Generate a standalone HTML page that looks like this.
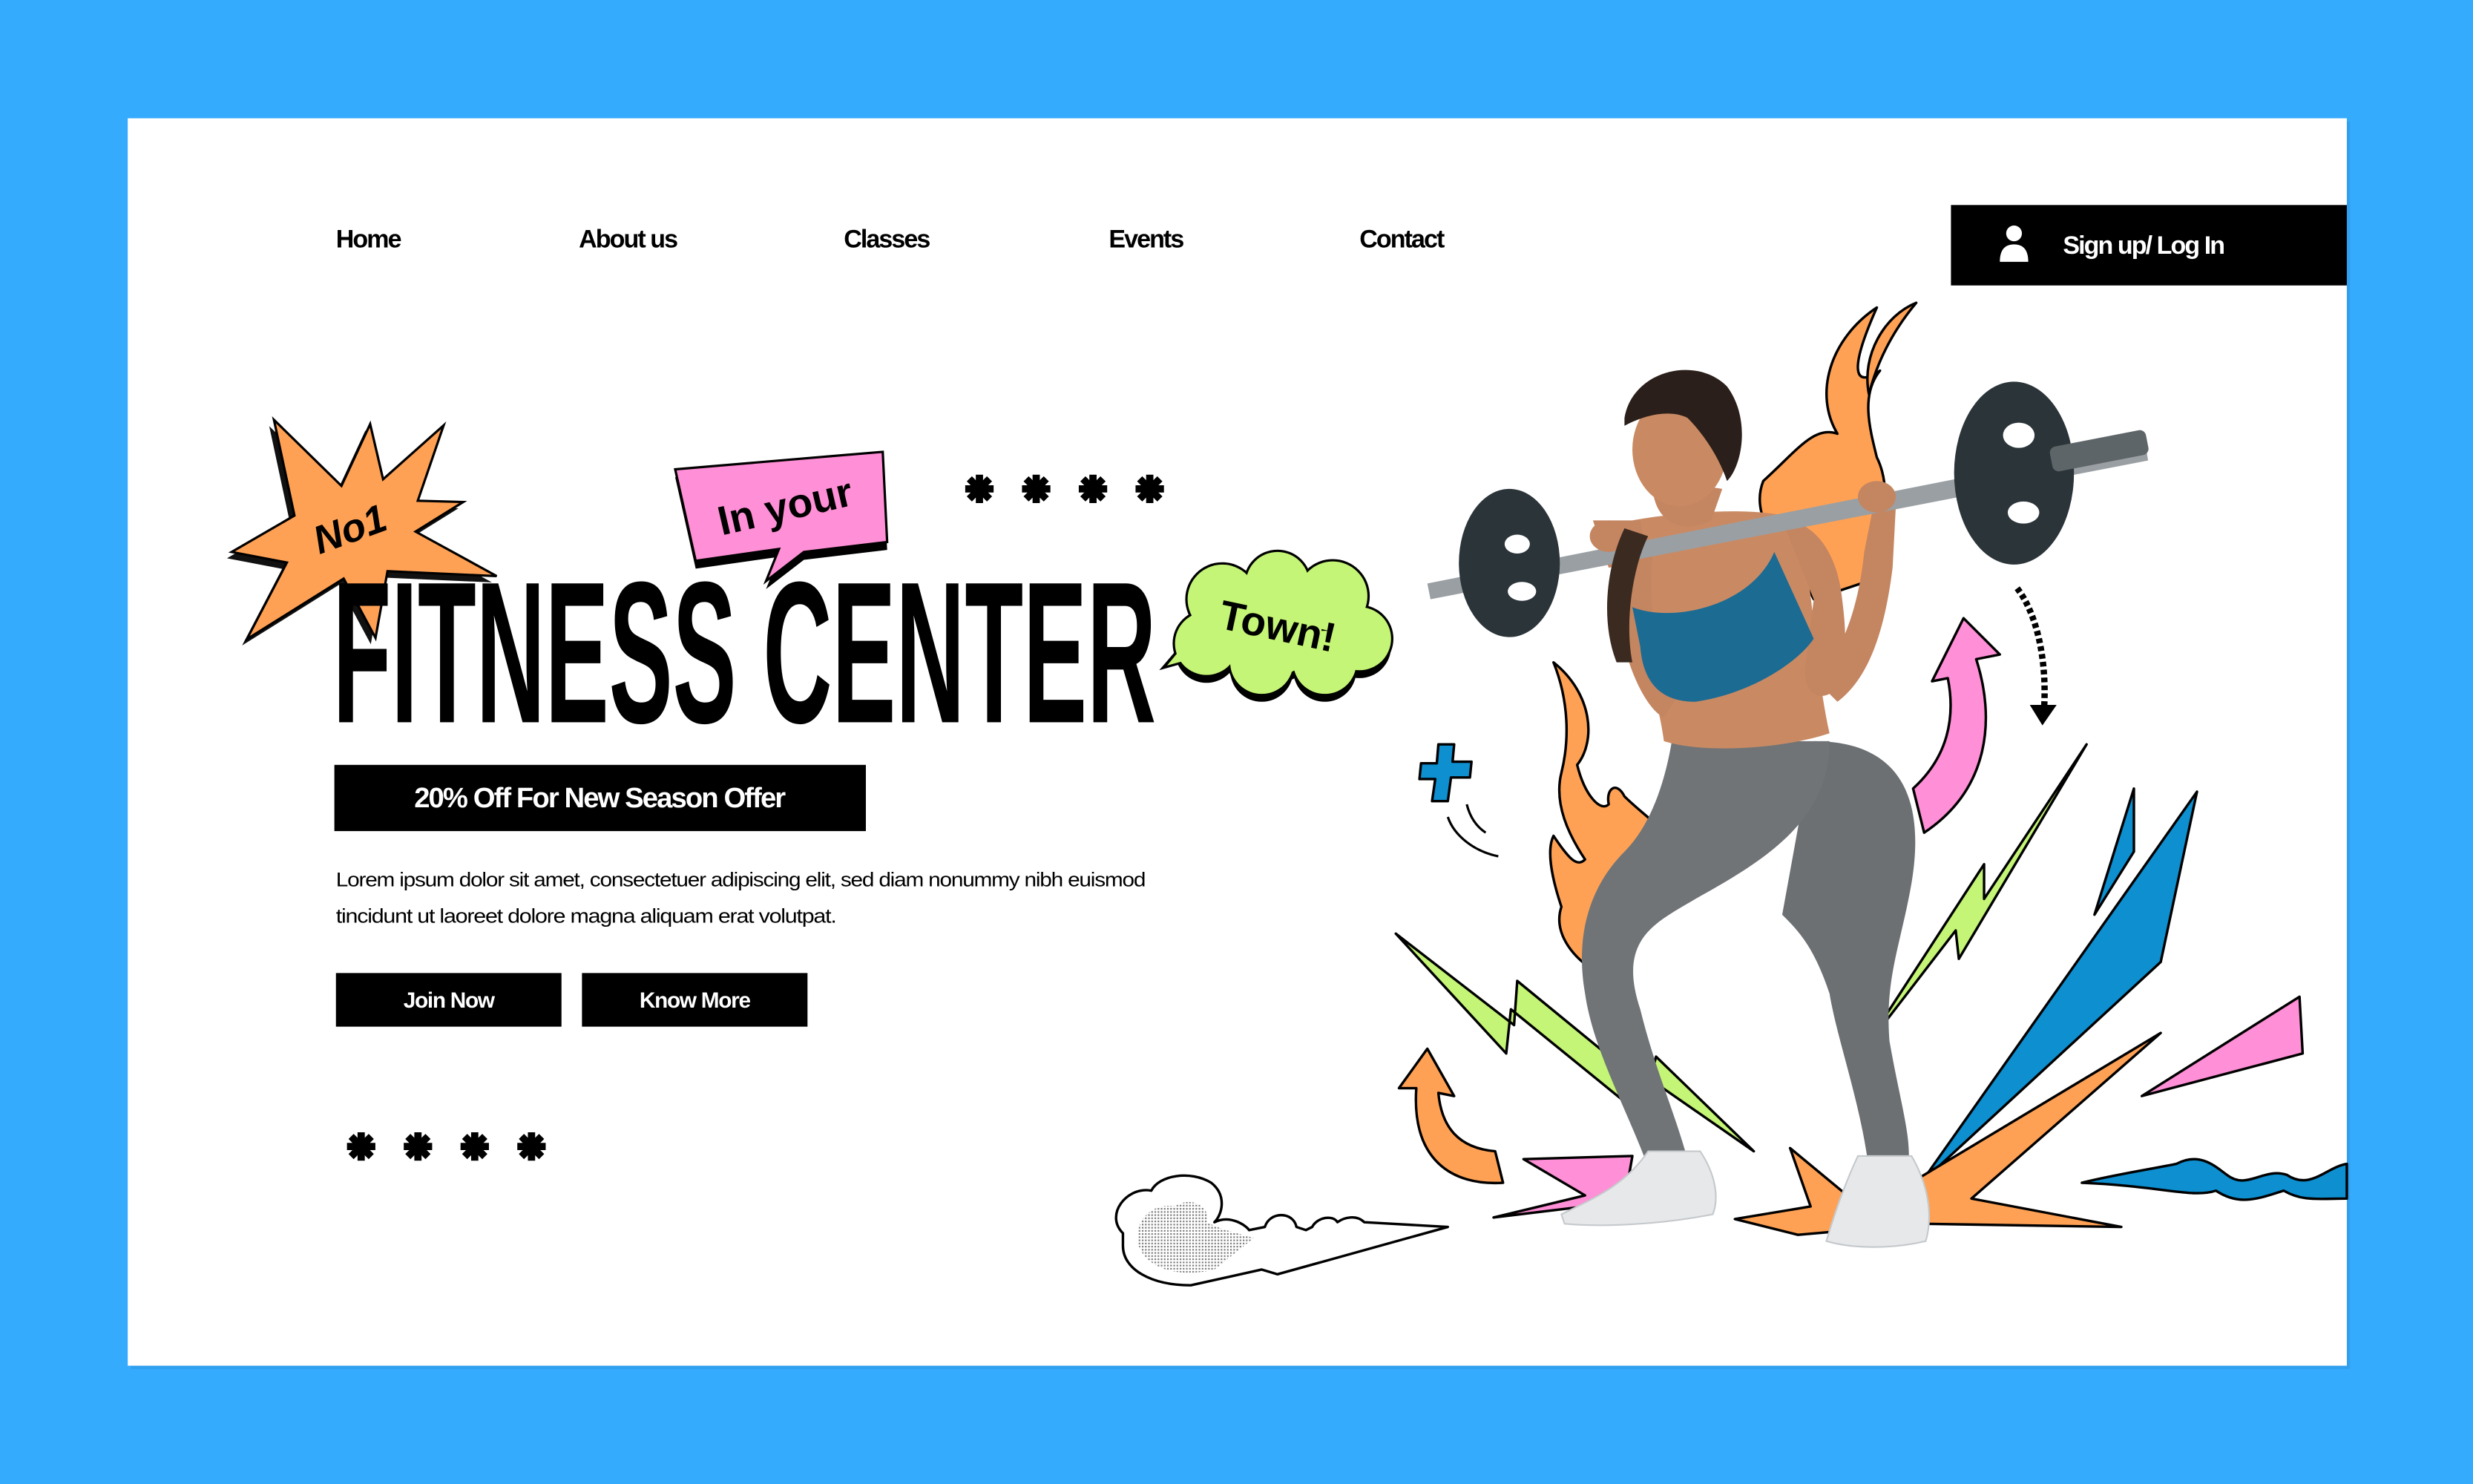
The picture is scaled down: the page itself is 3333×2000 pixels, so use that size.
<!DOCTYPE html>
<html><head><meta charset="utf-8"><style>
html,body{margin:0;padding:0;background:#35abfe;width:3333px;height:2000px;overflow:hidden}
svg{display:block}
</style></head><body>
<svg width="3333" height="2000" viewBox="0 0 1568 941" preserveAspectRatio="none" xmlns="http://www.w3.org/2000/svg" font-family="Liberation Sans, sans-serif">
<defs>
<pattern id="dots" width="2" height="2" patternUnits="userSpaceOnUse"><rect width="1" height="1" fill="#777"/></pattern>
<g id="ast"><g stroke="#000" stroke-width="4.6"><line x1="0" y1="-9" x2="0" y2="9"/><line x1="-9" y1="0" x2="9" y2="0"/><line x1="-6.4" y1="-6.4" x2="6.4" y2="6.4"/><line x1="-6.4" y1="6.4" x2="6.4" y2="-6.4"/></g></g>
</defs>
<rect width="1568" height="941" fill="#35abfe"/>
<rect x="83" y="77" width="1407" height="791" fill="#2a8fd8" opacity="0.4"/>
<rect x="81" y="75" width="1407" height="791" fill="#fff"/>

<!-- nav -->
<g font-size="16" font-weight="bold" letter-spacing="-0.9" fill="#000">
<text x="213" y="157">Home</text><text x="367" y="157">About us</text><text x="535" y="157">Classes</text><text x="703" y="157">Events</text><text x="862" y="157">Contact</text>
</g>
<rect x="1237" y="130" width="251" height="51" fill="#000"/>
<circle cx="1277" cy="148" r="5" fill="#fff"/>
<path d="M1268 166 q0-11 9-11 q9 0 9 11 z" fill="#fff"/>
<text x="1308" y="161" font-size="16" font-weight="bold" fill="#fff" letter-spacing="-0.9">Sign up/ Log In</text>

<!-- stickers -->
<polygon transform="translate(-3,4)" fill="#111" points="173.7,266.2 216.5,308.1 234.7,268.9 242.9,303.9 281.3,269.7 264.9,317.5 293.7,318.3 263.5,337.1 314.9,365.3 245.7,362.2 238.1,404.5 217.9,366.9 156.5,405.3 181.9,356.7 146.9,350 186.7,326.9"/>
<polygon fill="#ffa154" stroke="#000" stroke-width="1.5" points="173.7,266.2 216.5,308.1 234.7,268.9 242.9,303.9 281.3,269.7 264.9,317.5 293.7,318.3 263.5,337.1 314.9,365.3 245.7,362.2 238.1,404.5 217.9,366.9 156.5,405.3 181.9,356.7 146.9,350 186.7,326.9"/>
<text x="222" y="344" font-size="25" font-weight="bold" font-style="italic" text-anchor="middle" transform="rotate(-20 222 336)" fill="#000">No1</text>

<text x="211" y="458" font-size="128" font-weight="bold" textLength="522" lengthAdjust="spacingAndGlyphs" fill="#000">FITNESS CENTER</text>

<polygon transform="translate(0,5)" fill="#000" points="428.1,297.6 559.7,286.5 562.5,343.7 509.7,350 485.7,368.5 493.9,348.1 441.1,355.6"/>
<polygon fill="#ff8fd6" stroke="#000" stroke-width="1.5" points="428.1,297.6 559.7,286.5 562.5,343.7 509.7,350 485.7,368.5 493.9,348.1 441.1,355.6"/>
<text x="498" y="330" font-size="26" font-weight="bold" text-anchor="middle" transform="rotate(-13 498 322)" fill="#000">In your</text>

<g transform="translate(0,5)" fill="#000">
<circle cx="775" cy="380" r="22"/><circle cx="810" cy="370" r="20"/><circle cx="845" cy="378" r="22"/><circle cx="862" cy="405" r="20"/><circle cx="840" cy="420" r="20"/><circle cx="800" cy="420" r="20"/><circle cx="765" cy="408" r="20"/><circle cx="808" cy="398" r="30"/>
</g>
<g fill="#000">
<circle cx="775" cy="380" r="23.5"/><circle cx="810" cy="370" r="21.5"/><circle cx="845" cy="378" r="23.5"/><circle cx="862" cy="405" r="21.5"/><circle cx="840" cy="420" r="21.5"/><circle cx="800" cy="420" r="21.5"/><circle cx="765" cy="408" r="21.5"/>
<polygon points="752,405 735,425 760,418"/>
</g>
<g fill="#c4f576">
<circle cx="775" cy="380" r="22"/><circle cx="810" cy="370" r="20"/><circle cx="845" cy="378" r="22"/><circle cx="862" cy="405" r="20"/><circle cx="840" cy="420" r="20"/><circle cx="800" cy="420" r="20"/><circle cx="765" cy="408" r="20"/><circle cx="808" cy="398" r="30"/>
<polygon points="754,405 740,422 762,416"/>
</g>
<text x="810" y="406" font-size="26" font-weight="bold" text-anchor="middle" transform="rotate(12 810 398)" fill="#000">Town!</text>

<g transform="translate(621,310)"><use href="#ast"/><use href="#ast" x="36"/><use href="#ast" x="72"/><use href="#ast" x="108"/></g>
<g transform="translate(229,727)"><use href="#ast"/><use href="#ast" x="36"/><use href="#ast" x="72"/><use href="#ast" x="108"/></g>

<rect x="212" y="485" width="337" height="42" fill="#000"/>
<text x="380" y="512" font-size="18" font-weight="bold" text-anchor="middle" fill="#fff" letter-spacing="-0.9">20% Off For New Season Offer</text>
<g font-size="12.5" fill="#000" letter-spacing="-0.5">
<text x="213" y="562" textLength="513" lengthAdjust="spacingAndGlyphs">Lorem ipsum dolor sit amet, consectetuer adipiscing elit, sed diam nonummy nibh euismod</text>
<text x="213" y="585" textLength="317" lengthAdjust="spacingAndGlyphs">tincidunt ut laoreet dolore magna aliquam erat volutpat.</text>
</g>
<rect x="213" y="617" width="143" height="34" fill="#000"/>
<rect x="369" y="617" width="143" height="34" fill="#000"/>
<g font-size="14" font-weight="bold" fill="#fff" text-anchor="middle" letter-spacing="-0.6">
<text x="284.5" y="639">Join Now</text><text x="440.5" y="639">Know More</text></g>

<!-- decorations right -->
<g stroke="#000" stroke-width="1.6" stroke-linejoin="round">
<path d="M1190 195 C1160 215 1150 250 1165 275 C1150 270 1140 285 1118 305 C1110 325 1125 345 1140 360 L1150 380 L1180 370 C1195 340 1200 310 1190 290 C1185 270 1180 250 1192 235 C1178 245 1170 240 1190 195 Z" fill="#ffa154"/>
<path d="M1215 192 C1195 200 1180 225 1185 250 C1190 230 1200 210 1215 192 Z" fill="#ffa154"/>
<path d="M985 420 C1010 440 1012 470 1000 485 C1005 505 1015 515 1020 510 C1018 500 1025 495 1030 505 C1045 520 1065 530 1068 555 C1060 560 1040 560 1030 570 C1015 580 1010 600 1010 615 C995 605 985 590 990 575 C985 560 980 540 985 530 C995 545 1000 550 1005 545 C995 530 985 510 990 490 C995 470 995 445 985 420 Z" fill="#ffa154"/>
<path d="M1213 500 C1235 480 1240 455 1235 430 L1225 432 L1245 392 L1268 415 L1253 418 C1265 455 1262 500 1220 528 Z" fill="#ff8fd6"/>
<path d="M912 472 L922 472 L921 483 L933 483 L932 493 L920 493 L918 508 L908 508 L910 494 L900 494 L901 484 L911 484 Z" fill="#0d8fd0"/>
<path d="M885 592 L960 650 L962 622 L1045 690 L1050 670 L1112 730 L1040 680 L1038 705 L958 640 L955 668 Z" fill="#c4f576"/>
<path d="M1323 472 L1258 570 L1258 548 L1180 668 L1240 590 L1242 608 Z" fill="#c4f576"/>
<path d="M1353 500 L1353 540 L1328 580 Z" fill="#0d8fd0"/>
<path d="M1393 502 L1370 610 L1218 750 Z" fill="#0d8fd0"/>
<path d="M1100 773 L1148 765 L1135 728 L1170 757 L1215 748 L1370 655 L1250 760 L1345 778 L1220 776 L1140 783 Z" fill="#ffa154"/>
<path d="M1358 695 L1458 632 L1460 668 Z" fill="#ff8fd6"/>
<path d="M966 735 L1035 733 L1030 762 L947 772 L1005 758 Z" fill="#ff8fd6"/>
<path d="M1320 750 C1340 745 1360 742 1380 738 C1395 730 1405 740 1412 745 C1425 755 1435 740 1450 745 C1465 755 1475 740 1488 738 L1488 760 C1470 760 1460 762 1448 755 C1432 760 1420 765 1405 755 C1390 760 1370 752 1320 750 Z" fill="#0d8fd0"/>
<path d="M905 665 L922 695 L912 693 C914 715 925 728 948 730 L953 750 C920 752 895 735 898 690 L887 690 Z" fill="#ffa154"/>
<path d="M712 782 C700 770 715 752 730 755 C735 745 755 742 768 750 C778 758 775 770 770 775 C780 770 790 777 792 780 L802 778 C805 768 820 768 822 778 L828 780 L832 778 C835 772 845 770 848 775 C852 772 860 770 865 775 L918 778 L810 808 L800 805 L755 815 C730 815 712 805 712 790 Z" fill="#fff"/>
</g>
<path d="M722 790 C718 775 730 762 745 765 C755 758 768 765 765 775 C775 780 785 782 795 785 L770 805 C750 810 728 806 722 790 Z" fill="url(#dots)"/>
<path d="M1279 373 C1292 390 1298 420 1296 450" stroke="#000" stroke-width="4" stroke-dasharray="3 2" fill="none"/>
<path d="M1287 447 L1304 447 L1295 460 Z" fill="#000"/>
<path d="M918 518 C922 530 935 540 950 543" stroke="#000" stroke-width="1.5" fill="none"/>
<path d="M930 510 C932 518 936 524 942 528" stroke="#000" stroke-width="1.5" fill="none"/>

<!-- woman -->
<path d="M1150 470 C1200 470 1222 500 1212 560 C1205 600 1195 620 1198 660 C1205 700 1212 720 1210 740 L1185 742 C1180 700 1165 660 1160 630 C1150 600 1140 590 1130 580 Z" fill="#6c7073"/>
<path d="M1060 470 L1160 470 C1160 520 1120 545 1075 570 C1050 585 1025 595 1040 640 C1050 680 1060 700 1070 735 L1045 740 C1030 700 1010 665 1005 630 C998 590 1010 560 1030 540 C1045 525 1055 500 1060 470 Z" fill="#707477"/>
<path d="M990 770 C1010 760 1030 752 1045 730 L1078 730 C1088 745 1090 760 1086 770 C1050 777 1015 778 992 776 Z" fill="#e6e8ea" stroke="#c6c9cc" stroke-width="1"/>
<path d="M1158 787 C1163 770 1170 750 1178 733 L1212 733 C1222 750 1226 770 1221 787 C1200 792 1175 792 1158 787 Z" fill="#e6e8ea" stroke="#c6c9cc" stroke-width="1"/>
<path d="M1035 330 C1060 325 1120 320 1140 330 C1150 370 1150 420 1160 465 C1130 475 1080 478 1055 470 C1050 430 1030 400 1035 330 Z" fill="#c98a63"/>
<path d="M1130 330 C1150 330 1165 350 1168 380 C1172 410 1170 430 1160 440 C1150 445 1142 435 1145 420 L1150 380 Z" fill="#c48561"/>
<path d="M1150 430 C1165 420 1178 390 1182 350 L1188 320 L1202 322 L1200 360 C1195 400 1185 430 1165 445 Z" fill="#c48561"/>
<path d="M1040 340 C1025 360 1020 380 1030 410 C1035 430 1045 450 1055 455 L1065 440 C1050 420 1045 390 1048 350 Z" fill="#c48561"/>
<path d="M1010 330 L1040 330 L1045 355 L1020 360 Z" fill="#c48561"/>
<path d="M1035 385 C1060 395 1110 385 1125 350 L1150 405 C1140 420 1110 440 1075 445 C1055 445 1042 435 1040 410 Z" fill="#1c6b93"/>
<path d="M905 370 L1360 280 L1362 292 L907 380 Z" fill="#9a9fa3"/>
<ellipse cx="957" cy="357" rx="32" ry="47" fill="#2b3439"/>
<ellipse cx="962" cy="345" rx="8" ry="6" fill="#fff"/>
<ellipse cx="965" cy="375" rx="9" ry="6" fill="#fff"/>
<ellipse cx="1277" cy="300" rx="38" ry="58" fill="#2b3439"/>
<ellipse cx="1280" cy="276" rx="10" ry="8" fill="#fff"/>
<ellipse cx="1283" cy="325" rx="10" ry="7" fill="#fff"/>
<rect x="1300" y="278" width="62" height="16" rx="4" fill="#5e6569" transform="rotate(-11 1330 286)"/>
<ellipse cx="1020" cy="340" rx="12" ry="10" fill="#c48561"/>
<ellipse cx="1190" cy="315" rx="12" ry="10" fill="#c48561"/>
<path d="M1048 300 C1045 330 1065 340 1085 330 L1092 310 L1060 305 Z" fill="#c48561"/>
<ellipse cx="1065" cy="285" rx="30" ry="36" fill="#c98a63"/>
<path d="M1030 265 C1035 235 1075 225 1095 245 C1110 265 1105 295 1095 305 C1090 290 1080 275 1070 265 C1060 260 1045 262 1030 270 Z" fill="#2a1f1a"/>
<path d="M1030 335 C1018 360 1015 395 1025 420 L1035 420 C1030 395 1035 360 1045 340 Z" fill="#3a2a20"/>
</svg>
</body></html>
